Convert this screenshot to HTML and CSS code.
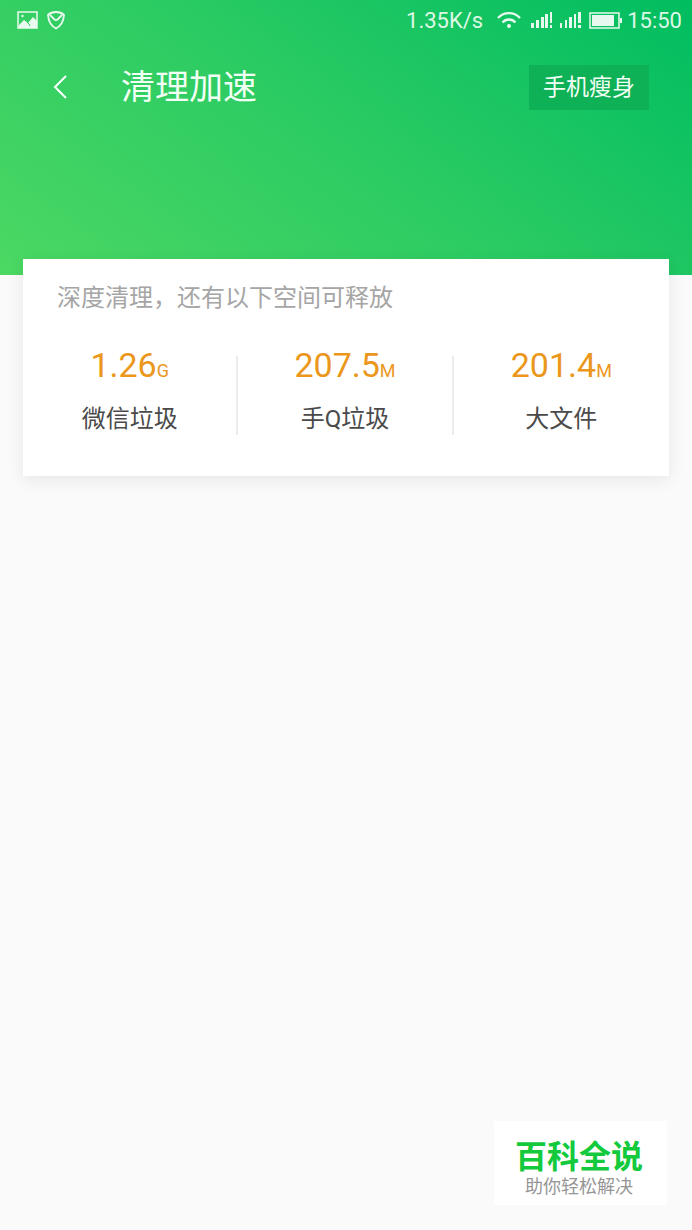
FILE: index.html
```html
<!DOCTYPE html>
<html lang="zh-CN">
<head>
<meta charset="utf-8">
<meta name="viewport" content="width=device-width, initial-scale=1">
<title>清理加速</title>
<link rel="stylesheet" href="styles.css">
</head>
<body>
<header class="hero">
  <div class="status">
    <div class="status-left">
      <svg width="22" height="20" viewBox="0 0 22 20" fill="none" aria-hidden="true">
        <rect x="1" y="2" width="19" height="16" stroke="#fff" stroke-width="1.5"/>
        <path d="M2 15l5-5 4 3 5-6 4 4v7H2z" fill="#fff"/>
        <circle cx="5.500" cy="6" r="1.200" fill="#fff"/>
        <path d="M10 12l2 2 1 2" stroke="#2fcb63"/>
      </svg>
      <svg width="18" height="20" viewBox="0 0 18 20" fill="none" stroke="#fff" stroke-width="1.8" stroke-linejoin="round" aria-hidden="true">
        <path d="M1 5c4-4 12-4 16 0-.4 6-2.500 10.500-8 13.500C3.500 15.500 1.400 11 1 5z"/>
        <path d="M3 5l4.500 4.500q1.500 1 3 0L15 5"/>
      </svg>
    </div>
    <div class="status-right">
      <span>1.35K/s</span>
      <svg class="wifi" width="24" height="18" viewBox="0 0 24 18" fill="none" stroke="#fff" stroke-width="2.4" aria-hidden="true">
        <path d="M1 7c6-6.500 16-6.500 22 0M5.500 11.500c3.600-4 9.400-4 13 0"/>
        <circle cx="12" cy="15" r="2" fill="#fff" stroke="none"/>
      </svg>
      <svg class="signal" width="22" height="18" viewBox="0 0 22 18" fill="#fff" aria-hidden="true">
        <path d="M0 12h3v5H0zM5 9h3v8H5zM10 6h3v11h-3zM14 3h3v14h-3zM19 1h2v11h-2zM19 14h2v3h-2z"/>
      </svg>
      <svg class="signal" width="22" height="18" viewBox="0 0 22 18" fill="#fff" aria-hidden="true">
        <path d="M0 12h2v5H0zM5 9h2v8H5zM9 6h3v11H9zM14 3h2v14h-2zM18 1h3v11h-3zM18 14h3v3h-3z"/>
      </svg>
      <svg width="34" height="18" viewBox="0 0 34 18" fill="none" aria-hidden="true">
        <rect x="1" y="2" width="29" height="15" stroke="#fff" stroke-width="1.5"/>
        <path d="M3 4h22v11H3zM31 7h2v5h-2z" fill="#fff"/>
      </svg>
      <time>15:50</time>
    </div>
  </div>
  <div class="toolbar">
    <button class="back" type="button" aria-label="返回">
      <svg width="16" height="26" viewBox="0 0 16 26" fill="none" stroke="#fff" stroke-width="2" aria-hidden="true"><path d="M14 2L3 13l11 11"/></svg>
    </button>
    <h1 class="title">清理加速</h1>
    <button class="slim" type="button">手机瘦身</button>
  </div>
</header>
<main class="card">
  <h2 class="hint">深度清理，还有以下空间可释放</h2>
  <ul class="stats">
    <li class="stat"><span class="value">1.26<small class="unit">G</small></span><span class="name">微信垃圾</span></li>
    <li class="stat"><span class="value">207.5<small class="unit">M</small></span><span class="name">手Q垃圾</span></li>
    <li class="stat"><span class="value">201.4<small class="unit">M</small></span><span class="name">大文件</span></li>
  </ul>
</main>
<aside class="brand">
  <strong class="brand-name">百科全说</strong>
  <span class="brand-line">助你轻松解决</span>
</aside>
</body>
</html>
```
FILE: styles.css
```css
* {
  box-sizing: border-box;
}

body {
  margin: 0;
  min-height: 100vh;
  display: flex;
  flex-direction: column;
  background: #fafafa;
  color: #4a4a4a;
  font-family: Roboto, "Noto Sans CJK SC", sans-serif;
}

button {
  border: 0;
  color: inherit;
  font: inherit;
}

svg {
  display: block;
}

.hero {
  padding-bottom: 165px;
  background: linear-gradient(36deg, #4cd863 0%, #2bcb63 50%, #00bd60 100%);
  color: #f2fff5;
}

.status {
  height: 40px;
  padding: 0 10px 0 17px;
  display: flex;
  align-items: center;
  justify-content: space-between;
  font-size: 22px;
  opacity: 0.9;
}

.status-left,
.status-right {
  display: flex;
  align-items: center;
  gap: 8px;
}

.status-right {
  gap: 4px;
}

.wifi {
  margin: 0 6px 0 10px;
}

.signal {
  margin-right: 3px;
}

.toolbar {
  padding: 24px 43px 0 44px;
  display: flex;
  align-items: center;
  height: 70px;
}

.back {
  padding: 0 8px;
  background: none;
}

.title {
  flex: 1;
  margin: 0 0 0 45px;
  font-size: 34px;
  line-height: 44px;
  font-weight: 400;
}

.slim {
  padding: 0 14px;
  background: #0fb157;
  font-size: 23px;
  line-height: 45px;
}

.card {
  position: relative;
  margin: -16px 23px 0;
  padding: 21px 0 41px;
  background: #fff;
  box-shadow: 0 4px 16px rgba(0, 0, 0, 0.08);
}

.hint {
  margin: 0;
  padding: 0 34px;
  color: #a5a5a5;
  font-size: 24px;
  line-height: 36px;
  font-weight: 400;
}

.stats {
  margin: 40px 0 0;
  padding: 0;
  display: grid;
  grid-template-columns: repeat(3, 1fr);
  list-style: none;
}

.stat {
  height: 79px;
  display: flex;
  flex-direction: column;
  align-items: center;
  justify-content: space-between;
}

.stat:not(:last-child) {
  border-right: 2px solid #ececec;
}

.value {
  color: #eb971b;
  font-size: 34px;
  line-height: 18px;
}

.unit {
  font-size: 18px;
}

.name {
  font-size: 24px;
  line-height: 32px;
}

.brand {
  margin: auto 25px 25px auto;
  padding: 16px 24px 8px 21px;
  display: flex;
  flex-direction: column;
  align-items: center;
  background: #fff;
}

.brand-name {
  color: #12ca3c;
  font-size: 32px;
  line-height: 40px;
  font-weight: 700;
}

.brand-line {
  color: #969696;
  font-size: 18px;
  line-height: 20px;
}
```
